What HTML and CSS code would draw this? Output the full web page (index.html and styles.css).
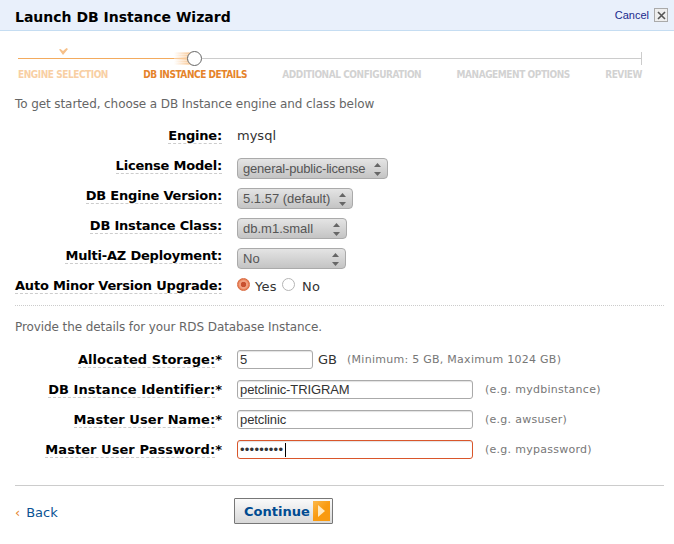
FILE: index.html
```html
<!DOCTYPE html>
<html>
<head>
  <title>Launch DB Instance Wizard</title>
  <link rel="stylesheet" href="styles.css">
</head>
<body>
  <!-- Header -->
  <div class="header">
    <h1>Launch DB Instance Wizard</h1>
    <a class="cancel" href="#">Cancel <span class="close">
      <svg width="9" height="9" viewBox="0 0 9 9"><path d="M1 1L8 8M8 1L1 8" stroke="#555" stroke-width="1.6"/></svg>
    </span></a>
  </div>

  <!-- Steps -->
  <div class="steps">
    <div class="track">
      <svg class="check" width="9" height="7" viewBox="0 0 9 7"><path d="M0 1.5L1.5 1L4 3L7.5 0L9 1L4 7Z" fill="#f6c089"/></svg>
      <div class="track-done"></div>
      <div class="glow"></div>
      <div class="dot"></div>
      <div class="track-todo"></div>
      <div class="track-end"></div>
    </div>
    <div class="step-labels">
      <span class="step-done">ENGINE SELECTION</span>
      <span class="step-current">DB INSTANCE DETAILS</span>
      <span>ADDITIONAL CONFIGURATION</span>
      <span>MANAGEMENT OPTIONS</span>
      <span>REVIEW</span>
    </div>
  </div>

  <p class="intro">To get started, choose a DB Instance engine and class below</p>

  <!-- Engine options -->
  <div class="rows">
    <div class="row">
      <div class="label"><span>Engine:</span></div>
      <div class="value">mysql</div>
    </div>
    <div class="row">
      <div class="label"><span>License Model:</span></div>
      <div class="select w151"><select><option>general-public-license</option></select>
        <svg class="arrows" width="7" height="13" viewBox="0 0 7 13"><path d="M3.5 0L7 4H0ZM0 9H7L3.5 13Z" fill="#666"/></svg></div>
    </div>
    <div class="row">
      <div class="label"><span>DB Engine Version:</span></div>
      <div class="select w116"><select><option>5.1.57 (default)</option></select>
        <svg class="arrows" width="7" height="13" viewBox="0 0 7 13"><path d="M3.5 0L7 4H0ZM0 9H7L3.5 13Z" fill="#666"/></svg></div>
    </div>
    <div class="row">
      <div class="label"><span>DB Instance Class:</span></div>
      <div class="select w110"><select><option>db.m1.small</option></select>
        <svg class="arrows" width="7" height="13" viewBox="0 0 7 13"><path d="M3.5 0L7 4H0ZM0 9H7L3.5 13Z" fill="#666"/></svg></div>
    </div>
    <div class="row">
      <div class="label"><span>Multi-AZ Deployment:</span></div>
      <div class="select w109"><select><option>No</option></select>
        <svg class="arrows" width="7" height="13" viewBox="0 0 7 13"><path d="M3.5 0L7 4H0ZM0 9H7L3.5 13Z" fill="#666"/></svg></div>
    </div>
    <div class="row">
      <div class="label"><span>Auto Minor Version Upgrade:</span></div>
      <div class="radios">
        <input type="radio" name="minor" checked><label>Yes</label>
        <input type="radio" name="minor"><label>No</label>
      </div>
    </div>
  </div>

  <div class="dotted"></div>
  <p class="intro second">Provide the details for your RDS Database Instance.</p>

  <!-- Instance details -->
  <div class="rows details">
    <div class="row">
      <div class="label"><span>Allocated Storage:</span>*</div>
      <input class="text short" type="text" value="5">
      <span class="unit">GB</span>
      <span class="hint">(Minimum: 5 GB, Maximum 1024 GB)</span>
    </div>
    <div class="row">
      <div class="label"><span>DB Instance Identifier:</span>*</div>
      <input class="text" type="text" value="petclinic-TRIGRAM">
      <span class="hint">(e.g. mydbinstance)</span>
    </div>
    <div class="row">
      <div class="label"><span>Master User Name:</span>*</div>
      <input class="text" type="text" value="petclinic">
      <span class="hint">(e.g. awsuser)</span>
    </div>
    <div class="row">
      <div class="label"><span>Master User Password:</span>*</div>
      <div class="pwd-wrap">
        <input class="text focused" type="password" value="mypasswrd">
        <div class="caret"></div>
      </div>
      <span class="hint">(e.g. mypassword)</span>
    </div>
  </div>

  <!-- Footer -->
  <div class="footer">
    <a class="back" href="#"><span class="back-arrow">&lsaquo;</span>Back</a>
    <button class="continue" type="button">Continue
      <span class="continue-icon"><svg width="7" height="12" viewBox="0 0 7 12"><path d="M0 0L7 6L0 12Z" fill="#ffe9c0"/></svg></span>
    </button>
  </div>
</body>
</html>
```

FILE: styles.css
```css
body {
  margin: 0;
  background-color: white;
  font-family: "DejaVu Sans", sans-serif;
  font-size: 12px;
  color: #666;
}

/* Header */
.header {
  display: flex;
  justify-content: space-between;
  align-items: center;
  box-sizing: border-box;
  height: 31px;
  padding: 4px 6px 0 15px;
  background-color: #e9f0fb;
  border-bottom: 1px solid #c5ddf2;
}

h1 {
  margin: 0;
  font-size: 14px;
  font-weight: bold;
  color: #000;
}

.cancel {
  display: flex;
  align-items: center;
  gap: 5px;
  margin-top: -4px;
  font-family: "Liberation Sans", sans-serif;
  font-size: 11px;
  color: #1a2a8c;
  text-decoration: none;
}

.close {
  display: flex;
  align-items: center;
  justify-content: center;
  width: 12px;
  height: 12px;
  background-color: #eee;
  border: 1px solid #aaa;
}

/* Steps */
.steps {
  padding: 15px 32px 0 18px;
}

.track {
  position: relative;
  display: flex;
  align-items: center;
  height: 24px;
}

.check {
  position: absolute;
  left: 41px;
  top: 2px;
}

.track-done {
  width: 169px;
  height: 1px;
  background-color: #f3ab5e;
}

.glow {
  position: absolute;
  left: 156px;
  top: 6px;
  width: 20px;
  height: 13px;
  background:
    repeating-linear-gradient(to bottom, rgba(255, 255, 255, 0.35) 0 1px, transparent 1px 2px),
    linear-gradient(to right, rgba(248, 180, 110, 0), rgba(248, 180, 110, 0.9));
}

.dot {
  position: relative;
  box-sizing: border-box;
  width: 15px;
  height: 15px;
  background-color: white;
  border: 1.5px solid #666;
  border-radius: 50%;
  flex-shrink: 0;
}

.track-todo {
  flex: 1;
  height: 1px;
  background-color: #ccc;
}

.track-end {
  width: 1px;
  height: 13px;
  background-color: #ccc;
}

.step-labels {
  display: flex;
  justify-content: space-between;
  font-family: "DejaVu Sans Condensed", "DejaVu Sans", sans-serif;
  font-size: 10px;
  font-weight: bold;
  letter-spacing: -0.44px;
  color: #d2d2d2;
  margin-top: -1px;
}

.step-done {
  color: #f8cfa4;
}

.step-current {
  color: #e5832a;
}

/* Intro text */
.intro {
  margin: 17px 0 0 15px;
  line-height: 14px;
  letter-spacing: -0.09px;
}

.second {
  margin-top: 14px;
}

/* Form rows */
.rows {
  margin-top: 9px;
}

.details {
  margin-top: 10px;
}

.row {
  display: flex;
  align-items: center;
  height: 30px;
}

.label {
  width: 207px;
  margin-left: 15px;
  margin-right: 15px;
  flex-shrink: 0;
  text-align: right;
  font-size: 13px;
  font-weight: bold;
  letter-spacing: -0.2px;
  color: #000;
  white-space: nowrap;
}

.details .label {
  letter-spacing: 0.05px;
}

.label span {
  border-bottom: 1px dashed #ccc;
}

.value {
  font-size: 13px;
  color: #333;
}

/* Selects */
.select {
  position: relative;
  margin-top: 6px;
}

.select select {
  appearance: none;
  width: 100%;
  height: 21px;
  padding: 0 0 0 5px;
  font-family: "Liberation Sans", sans-serif;
  font-size: 13px;
  color: #555;
  background: linear-gradient(#e4e4e4, #c4c4c4);
  border: 1px solid #aaa;
  border-radius: 4px;
}

.arrows {
  position: absolute;
  right: 7px;
  top: 5px;
}

.w151 { width: 151px; }
.w151 select { letter-spacing: -0.19px; }
.w116 { width: 116px; }
.w110 { width: 110px; }
.w109 { width: 109px; }

/* Radios */
.radios {
  display: flex;
  align-items: center;
  font-size: 13px;
  letter-spacing: 0.3px;
  color: #333;
}

.radios input {
  appearance: none;
  width: 13px;
  height: 13px;
  margin: -2px 5px 0 0;
  background-color: white;
  border: 1px solid #b5b5b5;
  border-radius: 50%;
}

.radios label {
  margin-right: 5px;
  padding-top: 2px;
}

.radios label:last-child {
  margin-left: 2px;
}

.radios input:checked {
  background: radial-gradient(circle, #c8502f 0 2.5px, #f0a080 3px 4px, #e8825a 5px);
  border-color: #d96a40;
}

.dotted {
  margin: 5px 10px 0 15px;
  border-top: 1px dotted #ccc;
}

/* Text inputs */
.text {
  box-sizing: border-box;
  width: 236px;
  height: 19px;
  padding: 0 2px;
  font-family: "Liberation Sans", sans-serif;
  font-size: 13px;
  letter-spacing: -0.1px;
  color: #333;
  border: 1px solid #aaa;
  border-radius: 3px;
  box-shadow: inset 0 1px 1px #e2e2e2;
  outline: none;
}

.short {
  width: 76px;
}

.focused {
  display: block;
  letter-spacing: 0.25px;
  border-color: #d9562b;
}

.pwd-wrap {
  position: relative;
}

.caret {
  position: absolute;
  left: 48px;
  top: 3px;
  width: 1px;
  height: 14px;
  background-color: #000;
}

.unit {
  margin-left: 5px;
  font-size: 13px;
  color: #333;
}

.hint {
  margin-left: 12px;
  font-size: 11px;
  letter-spacing: 0.27px;
  color: #777;
}

.unit + .hint {
  margin-left: 10px;
}

/* Footer */
.footer {
  display: flex;
  align-items: center;
  margin: 21px 10px 0 15px;
  padding-top: 12px;
  border-top: 1px solid #ccc;
}

.back {
  width: 219px;
  padding-top: 2px;
  font-size: 13px;
  color: #0b5394;
  text-decoration: none;
}

.back-arrow {
  margin-right: 6px;
  color: #e5832a;
}

.continue {
  display: flex;
  align-items: center;
  justify-content: space-between;
  box-sizing: border-box;
  width: 99px;
  height: 26px;
  padding: 0 2px 0 9px;
  font-family: "DejaVu Sans", sans-serif;
  font-size: 13px;
  font-weight: bold;
  color: #004b91;
  background: linear-gradient(#fafafa, #d8d8d8);
  border: 1px solid #777;
  border-radius: 1px;
}

.continue-icon {
  display: flex;
  align-items: center;
  justify-content: center;
  width: 17px;
  height: 20px;
  background: linear-gradient(135deg, #fcb84a, #f99a10 50%);
}
```
